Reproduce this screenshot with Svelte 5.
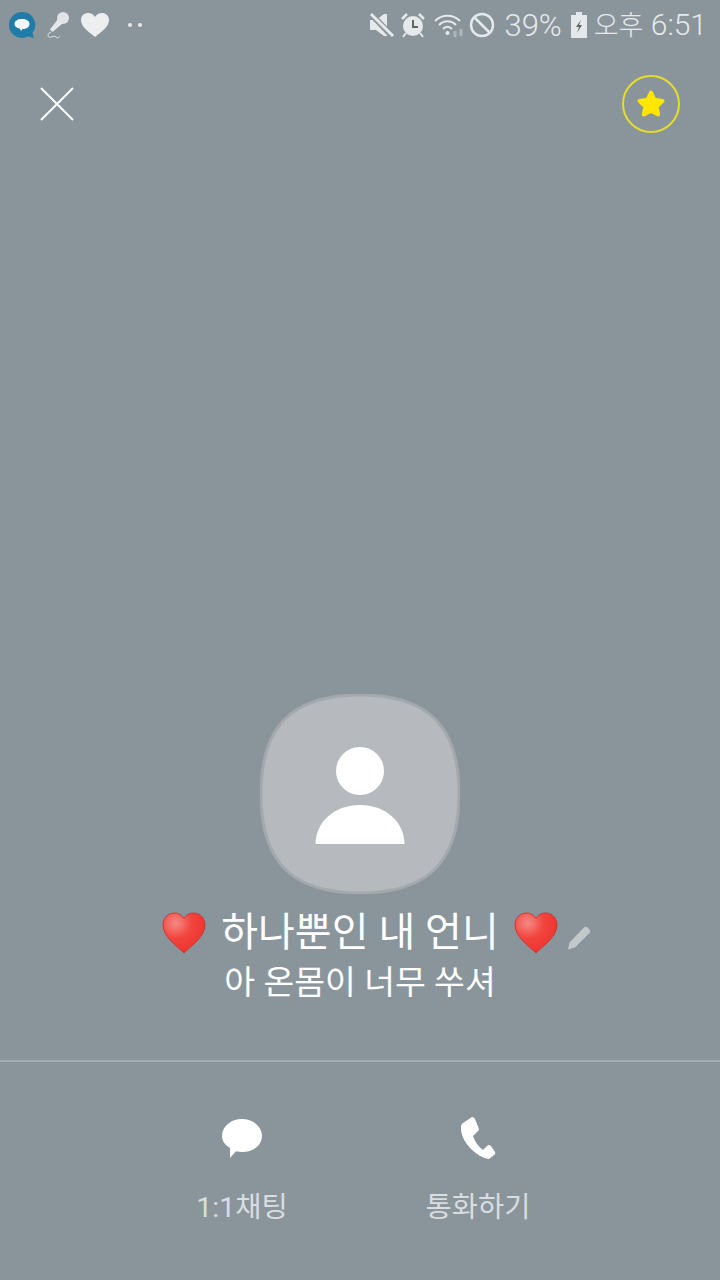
<script lang="ts">
  const actions = [
    { id: "chat", label: "1:1채팅" },
    { id: "call", label: "통화하기" }
  ];
</script>

{#snippet heart()}
  <svg class="heart" viewBox="0 0 44 42" aria-hidden="true">
    <path d="M22 41C15 34 1 25 1 13 1 5.500 6.500 1 12.500 1 16.500 1 20 3 22 6.500 24 3 27.500 1 31.500 1 37.500 1 43 5.500 43 13 43 25 29 34 22 41Z" fill="url(#heartFill)" stroke="#c93a36" stroke-width="1"/>
  </svg>
{/snippet}

<div class="screen">
  <svg class="defs" width="0" height="0" aria-hidden="true">
    <defs>
      <radialGradient id="heartFill" cx="0.3" cy="0.25" r="0.85">
        <stop offset="0" stop-color="#f58a84"/>
        <stop offset="0.45" stop-color="#f2453f"/>
        <stop offset="1" stop-color="#ee2f2a"/>
      </radialGradient>
    </defs>
  </svg>

  <header class="status">
    <div class="status-left">
      <svg width="28" height="28" viewBox="0 0 28 28" aria-hidden="true">
        <path d="M14 1a13 13 0 1 0 6 24.500l6 1.500-1.500-5A13 13 0 0 0 14 1Z" fill="#1f7ba8"/>
        <path d="M14 8c4.500 0 7.500 2 7.500 5s-3 5-7 5l-1.500 2-1-2.300C8.500 17 6.500 15.500 6.500 13c0-3 3-5 7.500-5Z" fill="#f2f5f6"/>
      </svg>
      <svg width="26" height="28" viewBox="0 0 26 28" aria-hidden="true">
        <circle cx="18" cy="7" r="6" fill="#e0e4e6"/>
        <path d="M13 8l4.500 4.500L7.500 21 5 18.500Z" fill="#e6e9eb"/>
        <path d="M6 21C3 22 2 25 4 26S9 24 11 26 14 26 15 25" fill="none" stroke="#e6e9eb" stroke-width="1"/>
      </svg>
      <svg width="30" height="26" viewBox="0 0 30 26" aria-hidden="true">
        <path d="M15 25C9 20 1 15 1 8 1 3.500 4.500 1 8 1c3 0 5.500 1.500 7 4 1.500-2.500 4-4 7-4 3.500 0 7 2.500 7 7 0 7-8 12-14 17Z" fill="#eceef0"/>
      </svg>
      <span class="dots"><i></i><i></i></span>
    </div>

    <div class="status-right">
      <svg width="26" height="26" viewBox="0 0 26 26" aria-hidden="true">
        <path d="M1 8h6l8-6h3v22h-3l-8-6H1Z" fill="#e6e9eb"/>
        <path d="M2 2l22 23" stroke="#8a959b" stroke-width="6"/>
        <path d="M2 2l22 22" stroke="#e6e9eb" stroke-width="3"/>
      </svg>
      <svg width="26" height="26" viewBox="0 0 26 26" aria-hidden="true">
        <path d="M6 21l-3 4M20 21l3 4" stroke="#e6e9eb" stroke-width="2"/>
        <circle cx="13" cy="14" r="10" fill="#e6e9eb"/>
        <path d="M13 8v7h5" fill="none" stroke="#5d666b" stroke-width="2"/>
        <path d="M2 7l5-5M24 7l-5-5" stroke="#e6e9eb" stroke-width="2.500"/>
      </svg>
      <svg class="wifi" width="32" height="26" viewBox="0 0 32 26" aria-hidden="true">
        <g fill="none" stroke="#e6e9eb" stroke-width="2">
          <path d="M1 9c7-7 18-7 25 0"/>
          <path d="M5 13c5-5 12-5 17 0"/>
          <path d="M9 17c3-3 6-3 9 0"/>
        </g>
        <circle cx="13.500" cy="21" r="2" fill="#e6e9eb"/>
        <path d="M21 25v-6M27 24v-7" stroke="#aeb6ba" stroke-width="3"/>
      </svg>
      <svg class="block" width="26" height="26" viewBox="0 0 26 26" aria-hidden="true">
        <circle cx="13" cy="13" r="11" fill="none" stroke="#e6e9eb" stroke-width="2.500"/>
        <path d="M5.500 5.500l15 15" stroke="#e6e9eb" stroke-width="2.500"/>
      </svg>
      <span class="pct">39%</span>
      <svg class="battery" width="18" height="28" viewBox="0 0 18 28" aria-hidden="true">
        <path d="M6 1h6v3h5v23H1V4h5Z" fill="#e6e9eb"/>
        <path d="M11 9l-5 7h3l-2 6 5-8H9Z" fill="#5d666b"/>
      </svg>
      <span class="clock"><span class="ampm">오후</span> 6:51</span>
    </div>
  </header>

  <div class="topbar">
    <button class="close" aria-label="닫기">
      <svg width="34" height="34" viewBox="0 0 34 34">
        <path d="M1 1l32 32M33 1L1 33" stroke="#fff" stroke-width="2"/>
      </svg>
    </button>
    <button class="favorite" aria-label="즐겨찾기">
      <svg width="32" height="32" viewBox="0 0 32 32">
        <path d="M16 4.500l3.500 7.300 8 1.100-5.800 5.600 1.400 8-7.100-3.800-7.100 3.800 1.400-8-5.800-5.600 8-1.100Z" fill="#ffe600" stroke="#ffe600" stroke-width="4" stroke-linejoin="round"/>
      </svg>
    </button>
  </div>

  <main class="profile">
    <svg class="avatar" width="200" height="200" viewBox="0 0 200 200" aria-hidden="true">
      <path d="M100 1C168 1 199 32 199 100 199 168 168 199 100 199 32 199 1 168 1 100 1 32 32 1 100 1Z" fill="#b6babe" stroke="#a3a9ad" stroke-width="3"/>
      <circle cx="100" cy="77" r="24" fill="#fff"/>
      <path d="M55.500 150C56 127 75 111 100 111 125 111 144 127 144.500 150Z" fill="#fff"/>
    </svg>

    <div class="name">
      {@render heart()}
      <h1>하나뿐인 내 언니</h1>
      {@render heart()}
      <svg class="pencil" width="24" height="24" viewBox="0 0 24 24" aria-hidden="true">
        <path d="M17 1.500c1-1 2.500-1 3.500 0l2 2c1 1 1 2.500 0 3.500L8 21.500 1 23.500l1.500-7Z" fill="#c3c8cb"/>
      </svg>
    </div>
    <p class="message">아 온몸이 너무 쑤셔</p>
  </main>

  <nav class="actions">
    {#each actions as action}
      <button class="action">
        <span class="icon">
          {#if action.id === "chat"}
            <svg width="40" height="39" viewBox="0 0 40 39" aria-hidden="true">
              <path d="M20 0C31 0 40 7.500 40 17S31 33 20 33c-2 0-4-.3-6-.8L8 39V29C3 26 0 22 0 17 0 7.500 9 0 20 0Z" fill="#fff"/>
            </svg>
          {:else}
            <svg width="36" height="43" viewBox="0 0 36 43" aria-hidden="true">
              <path d="M3 6L12 0Q14 0 15 2L19 12Q19 14 17 15L13 19Q16 28 23 33L27 29Q29 27 31 29L35 35Q36 37 34 38L29 42C16 40 0 24 1 10Q1 7 3 6Z" fill="#fff"/>
            </svg>
          {/if}
        </span>
        <span>{action.label}</span>
      </button>
    {/each}
  </nav>
</div>

<style>
  :global(body) {
    margin: 0;
    background: #8a959b;
  }

  .screen {
    width: 720px;
    height: 1280px;
    display: flex;
    flex-direction: column;
    background: #8a959b;
    font-family: Roboto, "Noto Sans CJK KR", sans-serif;
    overflow: hidden;
  }

  .defs {
    position: absolute;
  }

  .status {
    height: 50px;
    flex: none;
    display: flex;
    align-items: center;
    justify-content: space-between;
    padding: 0 13px 0 8px;
    color: #e6e9eb;
  }

  .status-left,
  .status-right {
    display: flex;
    align-items: center;
  }

  .status-left {
    gap: 9px;
  }

  .status-right {
    gap: 5px;
    font-size: 30px;
    font-weight: 300;
    white-space: nowrap;
  }

  .dots {
    display: flex;
    gap: 6px;
    margin-left: 9px;
  }

  .dots i {
    width: 4px;
    height: 4px;
    border-radius: 50%;
    background: #e6e9eb;
  }

  .wifi {
    margin-left: 3px;
  }

  .block {
    margin-left: -2px;
  }

  .pct {
    margin-left: 4px;
    font-size: 31px;
  }

  .battery {
    margin-left: 3px;
  }

  .clock {
    margin-left: 1px;
    margin-bottom: 4px;
  }

  .ampm {
    font-size: 27px;
  }

  .topbar {
    height: 110px;
    flex: none;
    display: flex;
    justify-content: space-between;
    padding: 25px 40px 0;
    box-sizing: border-box;
  }

  button {
    border: 0;
    padding: 0;
    background: none;
    font: inherit;
    color: inherit;
  }

  .close {
    width: 34px;
    height: 34px;
    margin-top: 12px;
  }

  .favorite {
    width: 58px;
    height: 58px;
    box-sizing: border-box;
    border: 2.500px solid #e6dc2a;
    border-radius: 50%;
    display: flex;
    align-items: center;
    justify-content: center;
  }

  .profile {
    flex: 1;
    display: flex;
    flex-direction: column;
    align-items: center;
    justify-content: flex-end;
    padding-bottom: 54px;
  }

  .name {
    position: relative;
    display: flex;
    align-items: center;
    gap: 15px;
    margin-top: 14px;
    height: 50px;
  }

  .heart {
    width: 44px;
    height: 42px;
  }

  h1 {
    margin: 0;
    font-size: 40px;
    font-weight: 400;
    line-height: 50px;
    color: #fff;
    white-space: nowrap;
  }

  .pencil {
    position: absolute;
    left: 405px;
    top: 18px;
  }

  .message {
    margin: 2px 0 0;
    font-size: 33.500px;
    line-height: 46px;
    color: #fff;
    white-space: nowrap;
  }

  .actions {
    height: 220px;
    flex: none;
    box-sizing: border-box;
    border-top: 2px solid #a2acb1;
    display: grid;
    grid-template-columns: 236px 236px;
    justify-content: center;
    padding-top: 54px;
  }

  .action {
    display: flex;
    flex-direction: column;
    align-items: center;
    align-self: start;
    gap: 24px;
    color: #d9dde0;
    font-size: 28.500px;
    font-weight: 400;
  }

  .icon {
    height: 44px;
    display: flex;
    align-items: center;
  }
</style>
